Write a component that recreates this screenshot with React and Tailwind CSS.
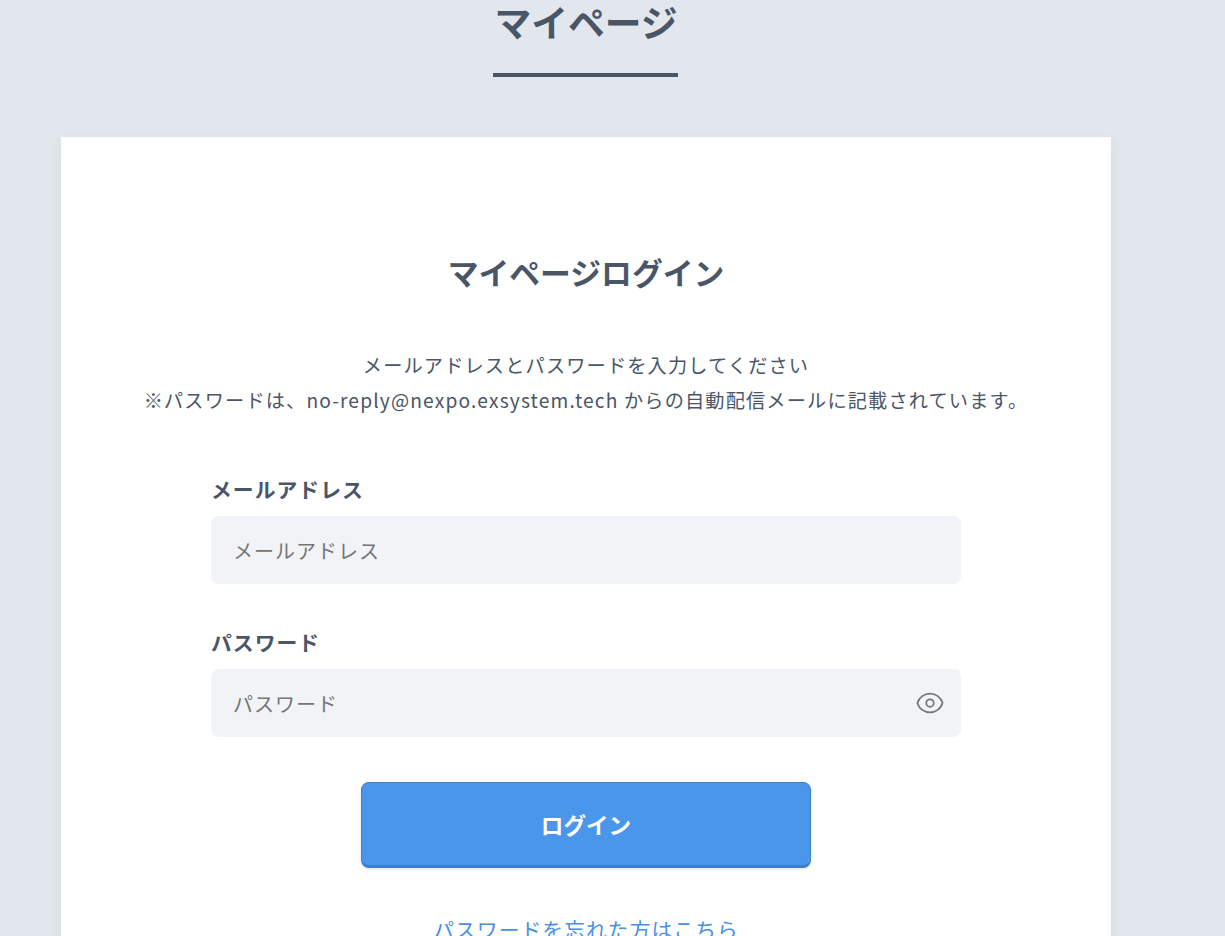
import React from "react";

const Eye = () => (
  <svg width="30" height="30" viewBox="0 0 24 24" fill="none" stroke="#757575" strokeWidth="1.4" strokeLinecap="round" strokeLinejoin="round">
    <path d="M2.036 12.322a1.012 1.012 0 0 1 0-.639C3.423 7.51 7.36 4.5 12 4.5c4.638 0 8.573 3.007 9.963 7.178.07.207.07.431 0 .639C20.577 16.49 16.64 19.5 12 19.5c-4.638 0-8.573-3.007-9.963-7.178Z" />
    <path d="M15 12a3 3 0 1 1-6 0 3 3 0 0 1 6 0Z" />
  </svg>
);

const font = { fontFamily: '"Noto Sans CJK JP", sans-serif' };

export default function App() {
  return (
    <div style={font} className="h-[936px] overflow-hidden bg-[#e2e7ee] text-[#4a5568]">
      <div className="w-[1172px]">
        <div className="flex flex-col items-center">
          <h1 className="mt-[-6px] text-[36.8px] leading-[54px] font-bold">マイページ</h1>
          <div className="mt-[25px] mr-[2px] h-1 w-[185px] bg-[#4a5568]"></div>
        </div>
        <div className="mx-auto mt-[60px] w-[1050px] bg-white px-[150px] pt-[111px] pb-24 shadow-[0_4px_14px_rgba(0,0,0,0.06)]">
          <h2 className="text-center text-[30.8px] leading-[48px] font-bold">マイページログイン</h2>
          <div className="mx-[-100px] mt-[52px] text-center text-[19.2px] leading-[35px] font-normal tracking-[0.06em]">
            <p>メールアドレスとパスワードを入力してください</p>
            <p>※パスワードは、no-reply@nexpo.exsystem.tech からの自動配信メールに記載されています。</p>
          </div>
          <form className="mt-[53px]">
            <label className="block text-[20.8px] leading-[36px] font-bold tracking-[0.05em]">メールアドレス</label>
            <div className="mt-[9px] flex h-[68px] items-center rounded-lg bg-[#f1f3f7] px-[22px] text-[20px] tracking-[0.05em] text-[#757575]">
              <span className="pt-[2px]">メールアドレス</span>
            </div>
            <label className="mt-[40px] block text-[20.8px] leading-[36px] font-bold tracking-[0.05em]">パスワード</label>
            <div className="mt-[9px] flex h-[68px] items-center justify-between rounded-lg bg-[#f1f3f7] pr-[16px] pl-[22px] text-[20px] tracking-[0.05em] text-[#757575]">
              <span className="pt-[2px]">パスワード</span>
              <Eye />
            </div>
            <div className="mt-[45px] flex justify-center">
              <button type="button" className="h-[86px] w-[450px] rounded-lg border border-b-[3px] border-[#3f7fc9] bg-[#4a96eb] pt-[2px] text-[22.6px] font-bold text-white shadow-sm">ログイン</button>
            </div>
            <p className="mt-[46px] text-center text-[20.8px] font-normal tracking-[0.05em]"><a className="text-[#4a90e2]">パスワードを忘れた方はこちら</a></p>
          </form>
        </div>
      </div>
    </div>
  );
}
